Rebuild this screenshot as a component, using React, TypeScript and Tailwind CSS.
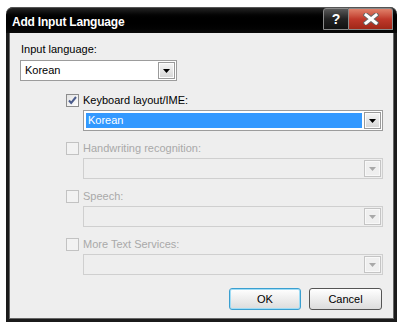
import React from 'react'

const font = "font-['Tahoma','Liberation_Sans',sans-serif] text-[11px] leading-[13px]"

function Arrow({ disabled }: { disabled?: boolean }) {
  return (
    <svg width="7" height="4" viewBox="0 0 7 4">
      <path d="M0 0h7L3.5 4z" fill={disabled ? '#a8a8a8' : '#000'} />
    </svg>
  )
}

function DropButton({ disabled }: { disabled?: boolean }) {
  return (
    <div
      className={`w-[17px] h-full border flex items-center justify-center ${
        disabled
          ? 'border-[#c4c4c4] bg-[#efefef] shadow-[inset_0_0_0_1px_#f8f8f8]'
          : 'border-[#9a9a9a] bg-gradient-to-b from-[#f6f6f6] to-[#d6d6d6] shadow-[inset_0_0_0_1px_#fdfdfd]'
      }`}
    >
      <Arrow disabled={disabled} />
    </div>
  )
}

function Combo({ value, width, selected, disabled }: { value?: string; width: string; selected?: boolean; disabled?: boolean }) {
  return (
    <div
      className={`${width} h-[21px] border flex p-[1px] ${
        disabled ? 'border-[#cfcfcf] bg-[#eeeeee]' : 'border-[#9c9c9c] bg-white'
      }`}
    >
      <div className="flex-1 p-[1px] pr-[2px]">
        <div className={`h-full flex items-center pl-[2px] ${selected ? 'bg-[#3399ff] text-white' : 'text-black'}`}>
          {value}
        </div>
      </div>
      <DropButton disabled={disabled} />
    </div>
  )
}

function CheckBox({ checked, disabled }: { checked?: boolean; disabled?: boolean }) {
  return (
    <div
      className={`w-[13px] h-[13px] border flex items-center justify-center ${
        disabled ? 'border-[#c2c2c2] bg-[#f2f2f2]' : 'border-[#8c8c8c] bg-gradient-to-br from-[#e2e2e2] to-white'
      }`}
    >
      {checked && (
        <svg width="9" height="9" viewBox="0 0 9 9">
          <path d="M1 4.5l2.2 2.4L8 1" stroke="#4b5c8c" strokeWidth="2" fill="none" />
        </svg>
      )}
    </div>
  )
}

interface SectionProps {
  label: string
  checked?: boolean
  disabled?: boolean
  value?: string
}

const sections: SectionProps[] = [
  { label: 'Keyboard layout/IME:', checked: true, value: 'Korean' },
  { label: 'Handwriting recognition:', disabled: true },
  { label: 'Speech:', disabled: true },
  { label: 'More Text Services:', disabled: true },
]

function Section({ label, checked, disabled, value }: SectionProps) {
  return (
    <div className="flex flex-col mb-[11px]">
      <div className="flex items-center gap-[4px] pl-[57px]">
        <CheckBox checked={checked} disabled={disabled} />
        <span className={disabled ? 'text-[#a9a9a9]' : 'text-black'}>{label}</span>
      </div>
      <div className="pl-[74px] mt-[3px]">
        <Combo value={value} width="w-[300px]" selected={!disabled} disabled={disabled} />
      </div>
    </div>
  )
}

export default function App() {
  return (
    <div className="w-[405px] h-[328px] bg-white pt-[7px] pl-[6px]">
      <div className="w-[391px] h-[315px] flex flex-col">
        <div className="h-[26px] rounded-t-[7px] bg-gradient-to-b from-[#2a2a2a] via-black to-[#0a0a0a] flex items-start justify-between pl-[6px] pr-[4px] shadow-[inset_0_1px_0_#555]">
          <span className="text-white font-bold text-[12px] leading-[13px] tracking-[-0.2px] mt-[9px] font-['Liberation_Sans',sans-serif]">
            Add Input Language
          </span>
          <div className="flex mt-[1px] h-[22px]">
            <div className="w-[26px] rounded-tl-[3px] border border-[#8a8a8a] bg-gradient-to-b from-[#5a5a5a] via-[#222] to-[#111] flex items-center justify-center text-white font-bold text-[14px] font-['Liberation_Sans',sans-serif]">
              ?
            </div>
            <div className="w-[44px] rounded-tr-[3px] border border-l-0 border-[#8a8a8a] bg-gradient-to-b from-[#e0806a] via-[#c0392b] to-[#a02818] flex items-center justify-center">
              <svg width="16" height="12" viewBox="0 0 16 12">
                <path d="M3 2l10 8M13 2l-10 8" stroke="#666" strokeWidth="5" strokeLinecap="square" />
                <path d="M3 2l10 8M13 2l-10 8" stroke="#fff" strokeWidth="3" strokeLinecap="square" />
              </svg>
            </div>
          </div>
        </div>
        <div className={`flex-1 flex flex-col bg-[#eeeeee] border-[3px] border-t-0 border-[#1b1b1b] shadow-[inset_1px_0_0_#666,inset_-1px_0_0_#666,inset_0_-1px_0_#666] ${font}`}>
          <div className="pl-[12px] mt-[10px] text-black">Input language:</div>
          <div className="pl-[11px] mt-[4px] mb-[13px]">
            <Combo value="Korean" width="w-[157px]" />
          </div>
          {sections.map((s) => (
            <Section key={s.label} {...s} />
          ))}
          <div className="flex justify-end gap-[8px] pr-[12px] mt-[2px]">
            <button className="w-[72px] h-[22px] rounded-[3px] border border-[#3a9fd0] bg-gradient-to-b from-white to-[#dcdcdc] shadow-[inset_0_0_0_1px_#9fdcf5] text-black">
              OK
            </button>
            <button className="w-[73px] h-[22px] rounded-[3px] border border-[#555] bg-gradient-to-b from-white to-[#dcdcdc] text-black">
              Cancel
            </button>
          </div>
        </div>
      </div>
    </div>
  )
}
